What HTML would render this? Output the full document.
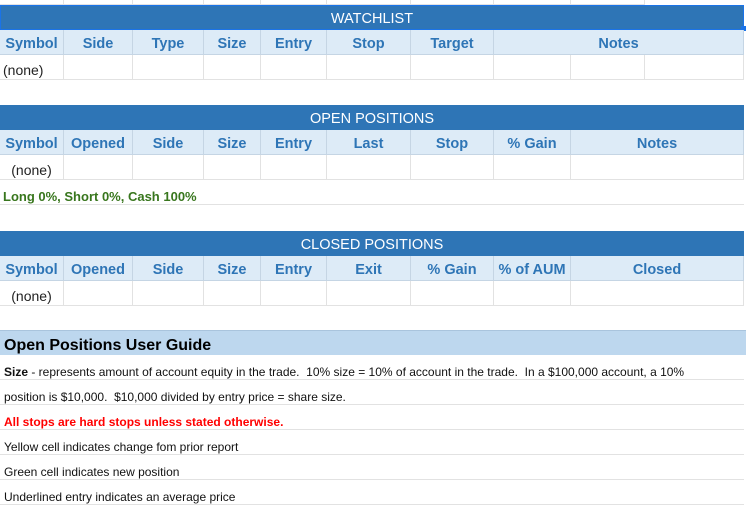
<!DOCTYPE html><html><head><style>
body{margin:0;width:747px;height:506px;overflow:hidden;background:#fff;font-family:"Liberation Sans",Arial,sans-serif;position:relative}
.c{position:absolute;box-sizing:border-box;border-right:1px solid #e2e2e2;border-bottom:1px solid #e2e2e2;white-space:nowrap;overflow:hidden}
.bh{position:absolute;left:0;width:744px;height:25px;background:#2e75b6;color:#fff;font-size:14.5px;text-align:center;line-height:29px}
.h{background:#ddebf7;color:#2e75b6;font-weight:bold;font-size:14.5px;text-align:center;line-height:28px;border-right:1px solid #c5d5e4;border-bottom:1px solid #c5d5e4}
.d{font-size:14px;line-height:30px;color:#222}
.g{position:absolute;left:0;width:744px;height:25px;border-bottom:1px solid #e2e2e2;font-size:12px;line-height:34px;padding-left:4px;box-sizing:border-box;color:#111;white-space:nowrap;overflow:hidden}
</style></head><body>
<div class="c" style="left:0;top:0;width:64px;height:5px"></div><div class="c" style="left:64px;top:0;width:69px;height:5px"></div><div class="c" style="left:133px;top:0;width:71px;height:5px"></div><div class="c" style="left:204px;top:0;width:57px;height:5px"></div><div class="c" style="left:261px;top:0;width:66px;height:5px"></div><div class="c" style="left:327px;top:0;width:84px;height:5px"></div><div class="c" style="left:411px;top:0;width:83px;height:5px"></div><div class="c" style="left:494px;top:0;width:77px;height:5px"></div><div class="c" style="left:571px;top:0;width:74px;height:5px"></div>

<div class="bh" style="top:5px;border:1px solid #1a73e8;box-sizing:border-box;line-height:27px">WATCHLIST</div>
<div style="position:absolute;left:741px;top:26px;width:5px;height:5px;background:#1a73e8"></div>
<div class="c h" style="left:0;top:30px;width:64px;height:25px">Symbol</div>
<div class="c h" style="left:64px;top:30px;width:69px;height:25px">Side</div>
<div class="c h" style="left:133px;top:30px;width:71px;height:25px">Type</div>
<div class="c h" style="left:204px;top:30px;width:57px;height:25px">Size</div>
<div class="c h" style="left:261px;top:30px;width:66px;height:25px">Entry</div>
<div class="c h" style="left:327px;top:30px;width:84px;height:25px">Stop</div>
<div class="c h" style="left:411px;top:30px;width:83px;height:25px">Target</div>
<div class="c h" style="left:494px;top:30px;width:250px;height:25px">Notes</div>
<div class="c d" style="left:0;top:55px;width:64px;height:25px;padding-left:3px">(none)</div>
<div class="c" style="left:64px;top:55px;width:69px;height:25px"></div><div class="c" style="left:133px;top:55px;width:71px;height:25px"></div><div class="c" style="left:204px;top:55px;width:57px;height:25px"></div><div class="c" style="left:261px;top:55px;width:66px;height:25px"></div><div class="c" style="left:327px;top:55px;width:84px;height:25px"></div><div class="c" style="left:411px;top:55px;width:83px;height:25px"></div><div class="c" style="left:494px;top:55px;width:77px;height:25px"></div><div class="c" style="left:571px;top:55px;width:74px;height:25px"></div><div class="c" style="left:645px;top:55px;width:99px;height:25px"></div>

<div class="bh" style="top:105px">OPEN POSITIONS</div>
<div class="c h" style="left:0;top:130px;width:64px;height:25px">Symbol</div>
<div class="c h" style="left:64px;top:130px;width:69px;height:25px">Opened</div>
<div class="c h" style="left:133px;top:130px;width:71px;height:25px">Side</div>
<div class="c h" style="left:204px;top:130px;width:57px;height:25px">Size</div>
<div class="c h" style="left:261px;top:130px;width:66px;height:25px">Entry</div>
<div class="c h" style="left:327px;top:130px;width:84px;height:25px">Last</div>
<div class="c h" style="left:411px;top:130px;width:83px;height:25px">Stop</div>
<div class="c h" style="left:494px;top:130px;width:77px;height:25px">% Gain</div>
<div class="c h" style="left:571px;top:130px;width:173px;height:25px">Notes</div>
<div class="c d" style="left:0;top:155px;width:64px;height:25px;text-align:center">(none)</div>
<div class="c" style="left:64px;top:155px;width:69px;height:25px"></div><div class="c" style="left:133px;top:155px;width:71px;height:25px"></div><div class="c" style="left:204px;top:155px;width:57px;height:25px"></div><div class="c" style="left:261px;top:155px;width:66px;height:25px"></div><div class="c" style="left:327px;top:155px;width:84px;height:25px"></div><div class="c" style="left:411px;top:155px;width:83px;height:25px"></div><div class="c" style="left:494px;top:155px;width:77px;height:25px"></div><div class="c" style="left:571px;top:155px;width:173px;height:25px"></div>
<div class="c" style="left:0;top:180px;width:744px;height:25px;border-right:none;font-size:13px;font-weight:bold;color:#38761d;line-height:34px;padding-left:3px">Long 0%, Short 0%, Cash 100%</div>

<div class="bh" style="top:231px">CLOSED POSITIONS</div>
<div class="c h" style="left:0;top:256px;width:64px;height:25px">Symbol</div>
<div class="c h" style="left:64px;top:256px;width:69px;height:25px">Opened</div>
<div class="c h" style="left:133px;top:256px;width:71px;height:25px">Side</div>
<div class="c h" style="left:204px;top:256px;width:57px;height:25px">Size</div>
<div class="c h" style="left:261px;top:256px;width:66px;height:25px">Entry</div>
<div class="c h" style="left:327px;top:256px;width:84px;height:25px">Exit</div>
<div class="c h" style="left:411px;top:256px;width:83px;height:25px">% Gain</div>
<div class="c h" style="left:494px;top:256px;width:77px;height:25px">% of AUM</div>
<div class="c h" style="left:571px;top:256px;width:173px;height:25px">Closed</div>
<div class="c d" style="left:0;top:281px;width:64px;height:25px;text-align:center">(none)</div>
<div class="c" style="left:64px;top:281px;width:69px;height:25px"></div><div class="c" style="left:133px;top:281px;width:71px;height:25px"></div><div class="c" style="left:204px;top:281px;width:57px;height:25px"></div><div class="c" style="left:261px;top:281px;width:66px;height:25px"></div><div class="c" style="left:327px;top:281px;width:84px;height:25px"></div><div class="c" style="left:411px;top:281px;width:83px;height:25px"></div><div class="c" style="left:494px;top:281px;width:77px;height:25px"></div><div class="c" style="left:571px;top:281px;width:173px;height:25px"></div>

<div style="position:absolute;left:0;top:330px;width:746px;height:25px;background:#bdd7ee;border-top:1px solid #a9c4dd;box-sizing:border-box;font-size:16px;font-weight:bold;line-height:29px;padding-left:4px;color:#000">Open Positions User Guide</div>
<div class="g" style="top:355px"><b>Size</b> - represents amount of account equity in the trade.&nbsp; 10% size = 10% of account in the trade.&nbsp; In a $100,000 account, a 10%</div>
<div class="g" style="top:380px">position is $10,000.&nbsp; $10,000 divided by entry price = share size.</div>
<div class="g" style="top:405px;color:#ff0000;font-weight:bold">All stops are hard stops unless stated otherwise.</div>
<div class="g" style="top:430px">Yellow cell indicates change fom prior report</div>
<div class="g" style="top:455px">Green cell indicates new position</div>
<div class="g" style="top:480px">Underlined entry indicates an average price</div>
</body></html>
